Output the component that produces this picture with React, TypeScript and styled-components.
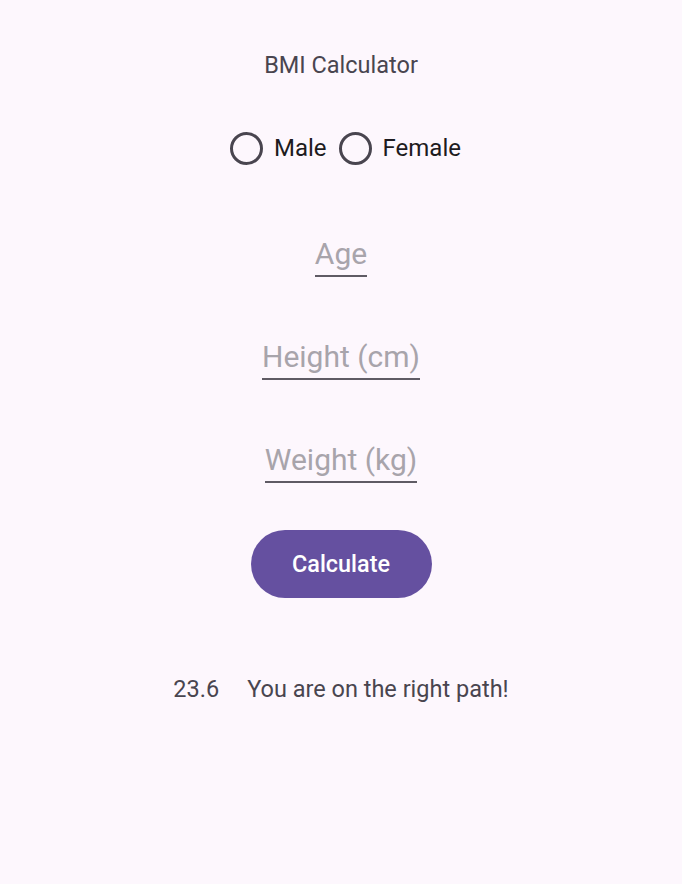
import React from "react";
import styled, { createGlobalStyle } from "styled-components";

const Global = createGlobalStyle`
  html, body { margin: 0; padding: 0; background: #fdf7fd; }
  body { font-family: Roboto, "Noto Sans", sans-serif; }
`;

const Page = styled.div`
  width: 682px;
  height: 884px;
  background: #fdf7fd;
  display: flex;
  flex-direction: column;
  align-items: center;
  box-sizing: border-box;
  padding-top: 51px;
`;

const Title = styled.div`
  font-size: 23.5px;
  line-height: 28px;
  color: #49454f;
  height: 28px;
`;

const RadioGroup = styled.div`
  margin-top: 52px;
  padding-left: 9px;
  display: flex;
  align-items: center;
  height: 34px;
`;

const RadioItem = styled.label`
  display: flex;
  align-items: center;
  font-size: 24px;
  color: #1d1b20;
  margin-right: 12px;
  &:last-child { margin-right: 0; }
`;

const Circle = styled.span`
  width: 27px;
  height: 27px;
  border: 3px solid #49454f;
  border-radius: 50%;
  margin-right: 11px;
  box-sizing: content-box;
`;

const Field = styled.div<{ $top: number }>`
  margin-top: ${(p) => p.$top}px;
  display: flex;
  flex-direction: column;
  align-items: stretch;
`;

const Hint = styled.div`
  font-size: 30px;
  line-height: 36px;
  color: #a8a4ab;
  text-align: center;
`;

const Underline = styled.div`
  height: 2px;
  background: #5f5b64;
  margin-top: 3px;
`;

const Button = styled.button`
  margin-top: 47px;
  width: 181px;
  height: 68px;
  border: none;
  border-radius: 34px;
  background: #6550a0;
  color: #ffffff;
  font-family: Roboto, "Noto Sans", sans-serif;
  font-weight: 500;
  font-size: 23.4px;
  padding: 0;
`;

const Result = styled.div`
  margin-top: 77px;
  display: flex;
  gap: 28px;
  font-size: 23.5px;
  line-height: 28px;
  color: #49454f;
`;

export default function App() {
  return (
    <>
      <Global />
      <Page>
        <Title>BMI Calculator</Title>
        <RadioGroup>
          <RadioItem>
            <Circle />
            Male
          </RadioItem>
          <RadioItem>
            <Circle />
            Female
          </RadioItem>
        </RadioGroup>
        <Field $top={71}>
          <Hint>Age</Hint>
          <Underline />
        </Field>
        <Field $top={62}>
          <Hint>Height (cm)</Hint>
          <Underline />
        </Field>
        <Field $top={62}>
          <Hint>Weight (kg)</Hint>
          <Underline />
        </Field>
        <Button>Calculate</Button>
        <Result>
          <span>23.6</span>
          <span>You are on the right path!</span>
        </Result>
      </Page>
    </>
  );
}
